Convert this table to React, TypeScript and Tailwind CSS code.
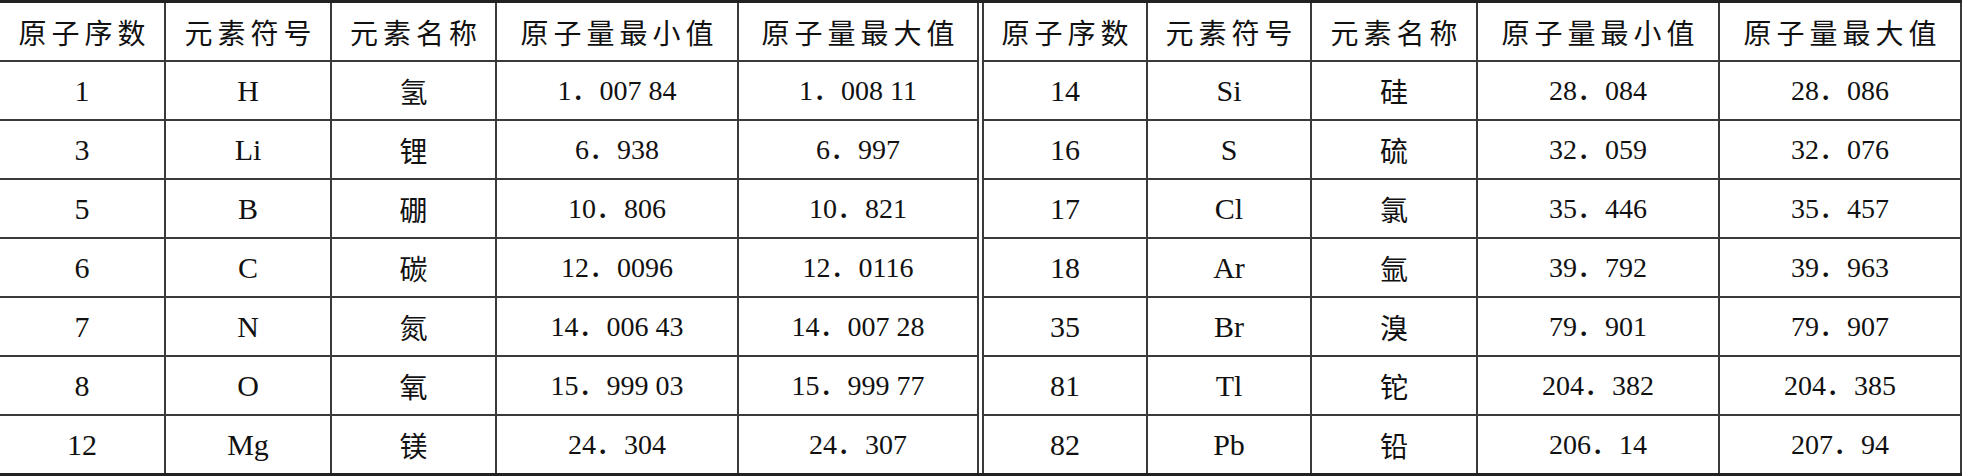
// App.tsx
const left = [
  ["1", "H", "氢", "1．007 84", "1．008 11"],
  ["3", "Li", "锂", "6．938", "6．997"],
  ["5", "B", "硼", "10．806", "10．821"],
  ["6", "C", "碳", "12．0096", "12．0116"],
  ["7", "N", "氮", "14．006 43", "14．007 28"],
  ["8", "O", "氧", "15．999 03", "15．999 77"],
  ["12", "Mg", "镁", "24．304", "24．307"],
];

const right = [
  ["14", "Si", "硅", "28．084", "28．086"],
  ["16", "S", "硫", "32．059", "32．076"],
  ["17", "Cl", "氯", "35．446", "35．457"],
  ["18", "Ar", "氩", "39．792", "39．963"],
  ["35", "Br", "溴", "79．901", "79．907"],
  ["81", "Tl", "铊", "204．382", "204．385"],
  ["82", "Pb", "铅", "206．14", "207．94"],
];

const headers = ["原子序数", "元素符号", "元素名称", "原子量最小值", "原子量最大值"];

// cell widths (include the 2px right line)
const leftW = ["w-[166px]", "w-[166px]", "w-[165px]", "w-[242px]", "w-[240px]"];
const rightW = ["w-[166px] border-l-2", "w-[164px]", "w-[166px]", "w-[242px]", "w-[242px] border-r-0"];

const latin = "font-['Liberation_Serif',serif] text-[30px]";
const cjk = "font-['Noto_Sans_CJK_SC',sans-serif] text-[28px]";
const num = "font-['Liberation_Serif','Noto_Sans_CJK_SC',serif] text-[28px]";

const fontFor = (i: number) => (i < 2 ? latin : i === 2 ? cjk : num);

type RowProps = { cells: string[]; widths: string[]; last: boolean; header?: boolean };

const Cells = ({ cells, widths, last, header }: RowProps) => (
  <>
    {cells.map((c, i) => (
      <div
        key={i}
        className={`${widths[i]} h-full shrink-0 flex items-center justify-center border-r-2 border-[#3a3a3a] ${
          last ? "" : "border-b-2"
        } ${header ? `${cjk} tracking-[5px] pl-[5px]` : fontFor(i)} whitespace-pre text-[#111]`}
      >
        {c}
      </div>
    ))}
  </>
);

const Row = ({ l, r, last, header }: { l: string[]; r: string[]; last: boolean; header?: boolean }) => (
  <div className={`flex ${last ? "h-[57px]" : "h-[59px]"}`}>
    <Cells cells={l} widths={leftW} last={last} header={header} />
    <div className="w-[3px] shrink-0 h-full" />
    <Cells cells={r} widths={rightW} last={last} header={header} />
  </div>
);

export default function App() {
  return (
    <div className="w-[1962px] h-[476px] bg-white">
      <div className="flex flex-col border-t-[3px] border-b-[3px] border-[#222]">
        <Row l={headers} r={headers} last={false} header />
        {left.map((row, i) => (
          <Row key={i} l={row} r={right[i]} last={i === left.length - 1} />
        ))}
      </div>
    </div>
  );
}
